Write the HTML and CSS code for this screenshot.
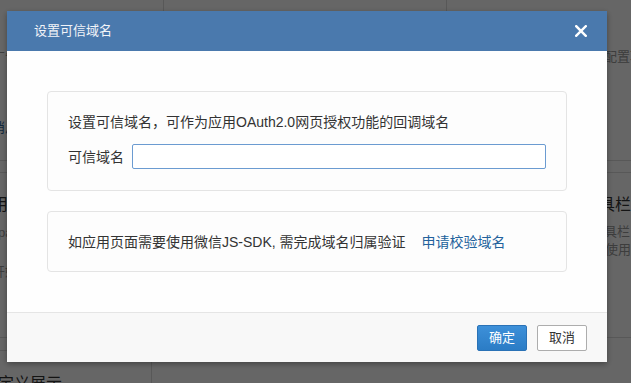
FILE: index.html
```html
<!DOCTYPE html>
<html lang="zh-CN">
<head>
<meta charset="utf-8">
<title>设置可信域名</title>
<link rel="stylesheet" href="styles.css">
</head>
<body>
<div class="page">
  <div class="row row-top">
    <div class="cell cell-left">
      <p class="small muted indent">广告位设置</p>
      <p class="small link indent">消息推送</p>
    </div>
    <div class="cell cell-mid"></div>
    <div class="cell cell-right">
      <p class="small muted">配置项</p>
    </div>
  </div>
  <div class="row row-mid">
    <div class="cell cell-left">
      <p class="big indent">用户</p>
      <p class="small muted indent2">pa</p>
      <p class="small muted indent gap-lg">开始</p>
    </div>
    <div class="cell cell-right wide">
      <p class="big shift">工具栏</p>
      <p class="small muted tight">工具栏</p>
      <p class="small muted push">使用</p>
    </div>
  </div>
  <div class="row row-bot">
    <div class="cell cell-left narrow">
      <p class="big indent3">自定义展示</p>
    </div>
    <div class="cell cell-rest"></div>
  </div>
</div>

<div class="overlay"></div>

<div class="modal">
  <div class="modal-header">
    <span class="modal-title">设置可信域名</span>
    <svg class="close" width="12" height="12" viewBox="0 0 12 12" aria-hidden="true">
      <path d="M1.2 1.2 L10.8 10.8 M10.8 1.2 L1.2 10.8" stroke="#ffffff" stroke-width="2.4" stroke-linecap="square" fill="none"/>
    </svg>
  </div>
  <div class="modal-body">
    <div class="panel">
      <p class="panel-text">设置可信域名，可作为应用OAuth2.0网页授权功能的回调域名</p>
      <div class="field">
        <label class="field-label">可信域名</label>
        <input class="field-input" type="text">
      </div>
    </div>
    <div class="panel panel-second">
      <p class="panel-text">如应用页面需要使用微信JS-SDK, 需完成域名归属验证<a class="panel-link">申请校验域名</a></p>
    </div>
  </div>
  <div class="modal-footer">
    <button class="btn btn-primary">确定</button>
    <button class="btn btn-default">取消</button>
  </div>
</div>
</body>
</html>
```

FILE: styles.css
```css
* { box-sizing: border-box; }

html, body {
  margin: 0;
  padding: 0;
  width: 631px;
  height: 383px;
  overflow: hidden;
  background: #fff;
}

body {
  font-family: "Liberation Sans", "Noto Sans CJK SC", sans-serif;
  color: #333;
}

p { margin: 0; white-space: nowrap; }

/* ---------- background page ---------- */
.page {
  width: 631px;
  overflow: hidden;
}

.row { display: grid; }

.row-top {
  grid-template-columns: 163px 284px 1fr;
  height: 161px;
  border-bottom: 1px solid #dcdcdc;
}

.row-mid {
  grid-template-columns: 447px 1fr;
  margin-top: 11px;
  height: 166px;
  border-top: 1px solid #dcdcdc;
  border-bottom: 1px solid #dcdcdc;
}

.row-bot {
  grid-template-columns: 151px 1fr;
  margin-top: 12px;
  height: 40px;
}

.cell { overflow: hidden; }

.row-top .cell-left { padding-top: 48px; }
.row-top .cell-mid { border-left: 1px solid #dcdcdc; border-right: 1px solid #dcdcdc; }
.row-top .cell-right { padding: 48px 0 0 157px; }

.row-mid .cell-left { padding-top: 21px; }
.row-mid .cell-right { padding: 21px 0 0 144px; }

.row-bot .cell-left { border-top: 1px solid #dcdcdc; padding-top: 22px; }
.row-bot .cell-rest { border-left: 1px solid #dcdcdc; }

.small { font-size: 13px; line-height: 18px; }
.big { font-size: 16px; line-height: 22px; color: #333; }
.muted { color: #999; }
.link { color: #2a6496; margin-top: 53px; }

.indent { text-indent: -8px; }
.indent2 { text-indent: -2px; margin-top: 8px; }
.indent3 { text-indent: -18px; }
.shift { text-indent: -8px; }
.push { text-indent: 14px; }
.gap-lg { margin-top: 21px; }
.tight { margin-top: 7px; }

/* ---------- overlay ---------- */
.overlay {
  position: fixed;
  inset: 0;
  background: rgba(0, 0, 0, 0.6);
}

/* ---------- modal ---------- */
.modal {
  position: fixed;
  left: 7px;
  top: 11px;
  width: 600px;
  background: #fff;
  box-shadow: 0 2px 6px rgba(0, 0, 0, 0.35);
}

.modal-header {
  height: 40px;
  background: #4a79ad;
  display: flex;
  align-items: center;
  justify-content: space-between;
  padding: 0 20px 0 27px;
}

.modal-title {
  color: #f2f4f8;
  font-size: 13px;
  line-height: 20px;
}

.close { display: block; }

.modal-body {
  padding: 40px 40px 40px;
  background: #fefefe;
}

.panel {
  border: 1px solid #e4e4e4;
  border-radius: 4px;
  background: #fdfdfd;
  padding: 20px 20px 21px 20px;
}

.panel-second {
  margin-top: 20px;
  padding-bottom: 19px;
}

.panel-text {
  font-size: 14px;
  line-height: 20px;
  color: #333;
}

.panel-link {
  color: #22629c;
  margin-left: 16px;
  cursor: pointer;
}

.field {
  display: flex;
  align-items: center;
  margin-top: 12px;
}

.field-label {
  font-size: 14px;
  line-height: 20px;
  color: #333;
  margin-right: 8px;
}

.field-input {
  flex: 1;
  height: 25px;
  border: 1px solid #6b9bd1;
  border-radius: 2px;
  background: #fff;
  padding: 0 6px;
  font-size: 13px;
  outline: none;
}

.modal-footer {
  display: flex;
  justify-content: flex-end;
  gap: 10px;
  padding: 12px 20px 11px;
  border-top: 1px solid #e5e5e5;
  background: #f8f8f8;
}

.btn {
  width: 50px;
  height: 26px;
  padding: 0;
  font-family: "Liberation Sans", "Noto Sans CJK SC", sans-serif;
  font-size: 13px;
  line-height: 24px;
  border-radius: 2px;
  cursor: pointer;
}

.btn-primary {
  background: linear-gradient(#3d90d9, #2b7cc5);
  border: 1px solid #2a72b6;
  color: #fff;
}

.btn-default {
  background: #fff;
  border: 1px solid #adadad;
  color: #333;
}
```
